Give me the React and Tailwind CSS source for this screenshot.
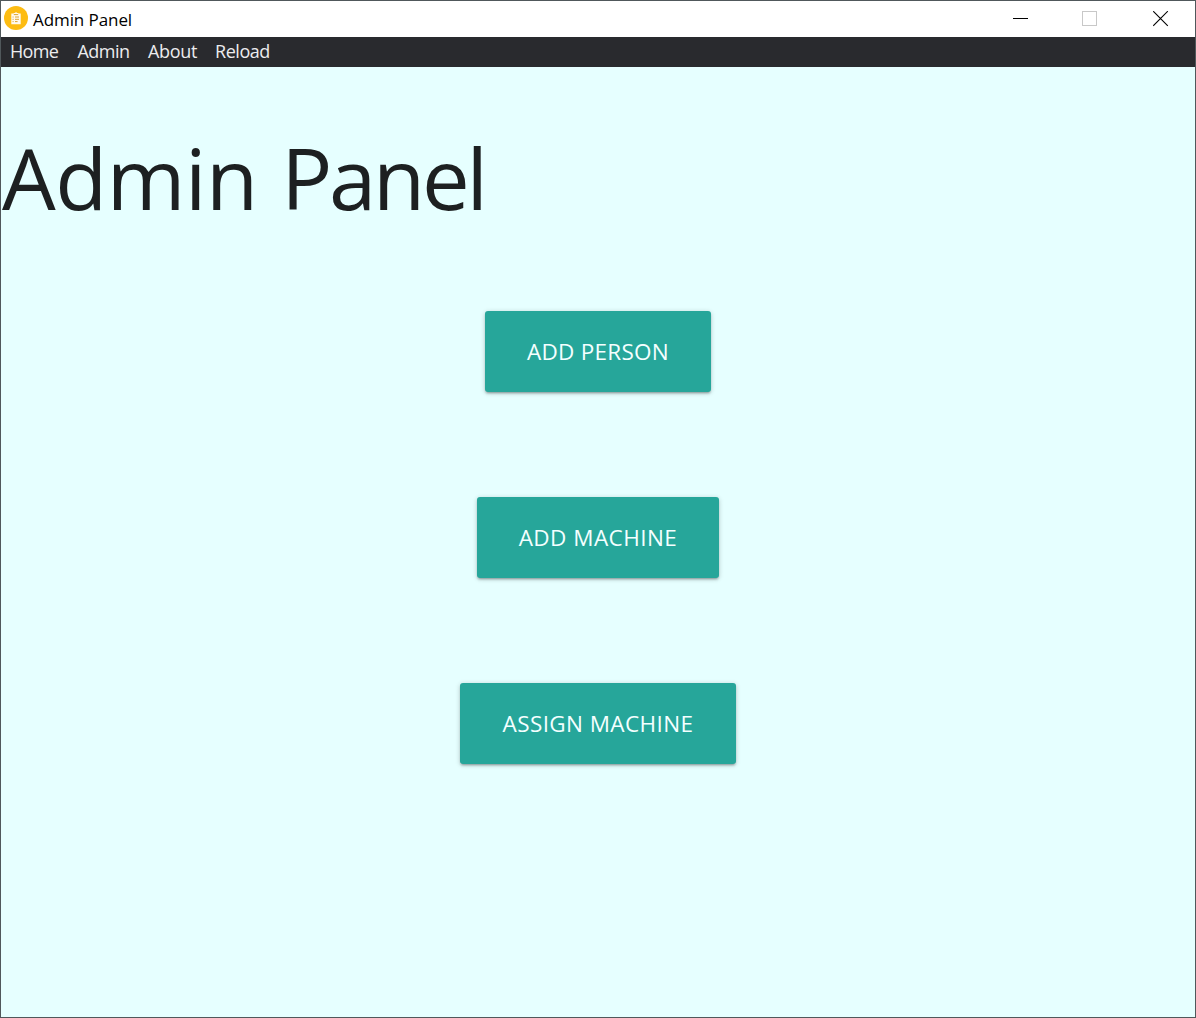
const menu = [
  { label: "Home", style: "w-[67.5px] tracking-[-0.7px]" },
  { label: "Admin", style: "w-[70.5px] tracking-[-0.55px]" },
  { label: "About", style: "w-[67px] tracking-[-0.3px]" },
  { label: "Reload", style: "w-[60px] tracking-[-0.45px]" },
];

const actions = [
  { label: "ADD PERSON", style: "w-[226px] tracking-[0.25px]" },
  { label: "ADD MACHINE", style: "w-[242px] tracking-[0.45px]" },
  { label: "ASSIGN MACHINE", style: "w-[276px] tracking-[0.4px]" },
];

function ClipboardLogo() {
  return (
    <svg className="size-6" viewBox="0 0 24 24" aria-hidden="true">
      <circle cx="12" cy="12" r="12" fill="#fdbc12" />
      <path d="M7.3 7.6h2.4V7h1.2a1.2 1.2 0 0 1 2.2 0h1.2v.6h2.4v10.6H7.3z" fill="#fffaf0" />
      <path d="M9.8 8.6h4.4M8.6 11h1M11 11h4M8.6 13.3h1M11 13.3h4M8.6 15.6h1M11 15.6h2.6" stroke="#d99a16" strokeWidth="0.9" fill="none" />
    </svg>
  );
}

function TitleBar() {
  return (
    <header className="flex h-9 shrink-0 items-center bg-white pl-[3px]">
      <div className="-mt-0.5"><ClipboardLogo /></div>
      <span className="ml-[5px] pt-px text-[17px] leading-[36px] tracking-[-0.08px] text-black">Admin Panel</span>
      <div className="ml-auto flex items-center pr-[26px]" aria-hidden="true">
        <svg className="mr-[53px] h-4 w-4" viewBox="0 0 16 16" shapeRendering="crispEdges">
          <path d="M0 7.5h15" stroke="#000" />
        </svg>
        <svg className="mr-[55px] h-4 w-4" viewBox="0 0 16 16" shapeRendering="crispEdges">
          <path d="M.5.5h14v14H.5z" fill="none" stroke="#c8c8c8" />
        </svg>
        <svg className="h-4 w-4" viewBox="0 0 16 16">
          <path d="M.2.2l14.6 14.6M14.8.2L.2 14.8" stroke="#000" strokeWidth="1.1" />
        </svg>
      </div>
    </header>
  );
}

export default function App() {
  return (
    <div className="flex h-[1018px] w-[1196px] flex-col overflow-hidden border border-[#50585b] bg-[#e6ffff] font-['Open_Sans',sans-serif]">
      <TitleBar />
      <nav className="flex h-[30px] shrink-0 bg-[#292a2e] pl-[9px] text-[18px] leading-[28px] text-[#ececee]">
        {menu.map((item) => (
          <a key={item.label} className={item.style}>{item.label}</a>
        ))}
      </nav>
      <main className="flex flex-col items-center">
        <h1 className="mt-[55px] self-start pl-px text-[85px] leading-[110px] tracking-[-0.5px] whitespace-nowrap text-[#1d2021] [word-spacing:2px]">
          Admin <span className="tracking-[-3.2px]">Panel</span>
        </h1>
        <div className="mt-[79px] flex flex-col items-center gap-[105px]">
          {actions.map((a) => (
            <button
              key={a.label}
              className={"h-[81px] rounded-[3px] bg-[#26a69a] text-center text-[22.5px] whitespace-nowrap text-[#f4ffff] shadow-[0_2px_2px_0_rgba(0,0,0,0.14),0_3px_1px_-2px_rgba(0,0,0,0.12),0_1px_5px_0_rgba(0,0,0,0.2)] " + a.style}
            >
              {a.label}
            </button>
          ))}
        </div>
      </main>
    </div>
  );
}
